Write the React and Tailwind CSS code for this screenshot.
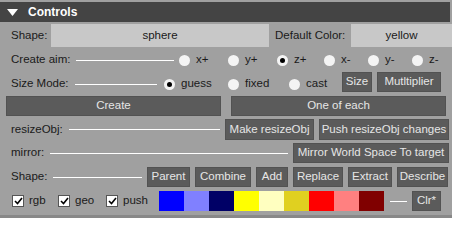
import React from "react";

const font = { fontFamily: '"Liberation Sans", Arial, sans-serif' };

const aims = [
  { label: "x+", w: "w-[49px]" },
  { label: "y+", w: "w-[49px]" },
  { label: "z+", w: "w-[47px]", on: true },
  { label: "x-", w: "w-[44px]" },
  { label: "y-", w: "w-[44px]" },
  { label: "z-", w: "w-[30px]" },
];

const modes = [
  { label: "guess", w: "w-[64px]", on: true },
  { label: "fixed", w: "w-[61px]" },
  { label: "cast", w: "w-[53px]" },
];

const swatches = [
  "bg-[#0000ff]",
  "bg-[#8080ff]",
  "bg-[#000066]",
  "bg-[#ffff00]",
  "bg-[#ffffc0]",
  "bg-[#e0d020]",
  "bg-[#ff0000]",
  "bg-[#ff8080]",
  "bg-[#800000]",
];

const Radio = ({ label, on, w }) => (
  <div className={`${w} flex items-center gap-[6px] shrink-0`}>
    <span className="w-[11px] h-[11px] rounded-full bg-[#f4f4f4] flex items-center justify-center">
      {on && <span className="w-[5px] h-[5px] rounded-full bg-black" />}
    </span>
    <span>{label}</span>
  </div>
);

const Btn = ({ children, className = "" }) => (
  <div
    className={`h-full flex items-center justify-center bg-[#5b5b5b] border border-[#525252] text-[#e6e6e6] shrink-0 ${className}`}
  >
    {children}
  </div>
);

const Line = ({ className = "" }) => (
  <div className={`h-px bg-white ${className}`} />
);

const Check = ({ label, w }) => (
  <div className={`${w} flex items-center gap-[5px] shrink-0`}>
    <span className="w-[12px] h-[12px] bg-white border border-[#555] flex items-center justify-center">
      <svg width="9" height="8" viewBox="0 0 9 8">
        <path d="M1 4 L3.5 6.5 L8 1" stroke="#000" strokeWidth="1.6" fill="none" />
      </svg>
    </span>
    <span>{label}</span>
  </div>
);

export default function App() {
  return (
    <div
      style={font}
      className="w-[452px] h-[218px] bg-[#a0a0a0] flex flex-col text-[11.5px] text-[#1a1a1a] pt-[2px] overflow-hidden"
    >
      {/* header */}
      <div className="h-[20px] mr-[2px] bg-[#444444] flex items-center">
        <svg className="ml-[7px]" width="11" height="7" viewBox="0 0 11 7">
          <polygon points="0,0 11,0 5.5,7" fill="#fff" />
        </svg>
        <span className="ml-[10px] text-white font-bold text-[12px]">Controls</span>
      </div>

      {/* shape / default color */}
      <div className="mt-[2px] h-[23px] flex items-center">
        <span className="w-[51px] pl-[11px] shrink-0">Shape:</span>
        <div className="w-[218px] h-full bg-[#c8c8c8] flex items-center justify-center shrink-0">
          sphere
        </div>
        <span className="w-[82px] pl-[6px] shrink-0">Default Color:</span>
        <div className="flex-1 h-full bg-[#c8c8c8] flex items-center justify-center">
          yellow
        </div>
      </div>

      {/* create aim */}
      <div className="mt-[1px] h-[24px] flex items-center">
        <span className="pl-[11px] shrink-0">Create aim:</span>
        <Line className="ml-[6px] mr-[5px] flex-1" />
        {aims.map((a) => (
          <Radio key={a.label} {...a} />
        ))}
        <div className="w-[10px] shrink-0" />
      </div>

      {/* size mode */}
      <div className="h-[24px] flex items-center">
        <span className="pl-[11px] shrink-0">Size Mode:</span>
        <Line className="ml-[6px] mr-[7px] flex-1" />
        {modes.map((m) => (
          <Radio key={m.label} {...m} />
        ))}
        <div className="self-start h-[20px] flex gap-[5px] mr-[11px]">
          <Btn className="w-[30px]">Size</Btn>
          <Btn className="w-[64px]">Mutltiplier</Btn>
        </div>
      </div>

      {/* create buttons */}
      <div className="h-[20px] flex gap-[10px] pl-[6px] pr-[6px]">
        <Btn className="w-[215px]">Create</Btn>
        <Btn className="flex-1">One of each</Btn>
      </div>

      {/* resizeObj */}
      <div className="mt-[3px] h-[21px] flex items-center pr-[3px]">
        <span className="pl-[11px] shrink-0">resizeObj:</span>
        <Line className="ml-[6px] mr-[5px] flex-1" />
        <div className="h-full flex gap-[5px]">
          <Btn className="w-[89px]">Make resizeObj</Btn>
          <Btn className="w-[130px]">Push resizeObj changes</Btn>
        </div>
      </div>

      {/* mirror */}
      <div className="mt-[3px] h-[20px] flex items-center pr-[3px]">
        <span className="pl-[11px] shrink-0">mirror:</span>
        <Line className="ml-[6px] mr-[5px] flex-1" />
        <Btn className="w-[156px]">Mirror World Space To target</Btn>
      </div>

      {/* shape ops */}
      <div className="mt-[4px] h-[20px] flex items-center pr-[4px]">
        <span className="pl-[11px] shrink-0">Shape:</span>
        <Line className="ml-[6px] mr-[5px] flex-1" />
        <div className="h-full flex gap-[5px]">
          <Btn className="w-[43px]">Parent</Btn>
          <Btn className="w-[56px]">Combine</Btn>
          <Btn className="w-[32px]">Add</Btn>
          <Btn className="w-[50px]">Replace</Btn>
          <Btn className="w-[44px]">Extract</Btn>
          <Btn className="w-[51px]">Describe</Btn>
        </div>
      </div>

      {/* checks + colors */}
      <div className="mt-[4px] h-[20px] flex items-center">
        <div className="pl-[12px] flex items-center">
          <Check label="rgb" w="w-[46px]" />
          <Check label="geo" w="w-[48px]" />
          <Check label="push" w="w-[53px]" />
        </div>
        <div className="h-full flex">
          {swatches.map((c) => (
            <div key={c} className={`w-[25px] h-full ${c}`} />
          ))}
        </div>
        <Line className="ml-[6px] w-[17px]" />
        <Btn className="ml-[5px] w-[29px]">Clr*</Btn>
      </div>

      <div className="flex-1" />
      <div className="h-[3px] bg-[#888888]" />
    </div>
  );
}
